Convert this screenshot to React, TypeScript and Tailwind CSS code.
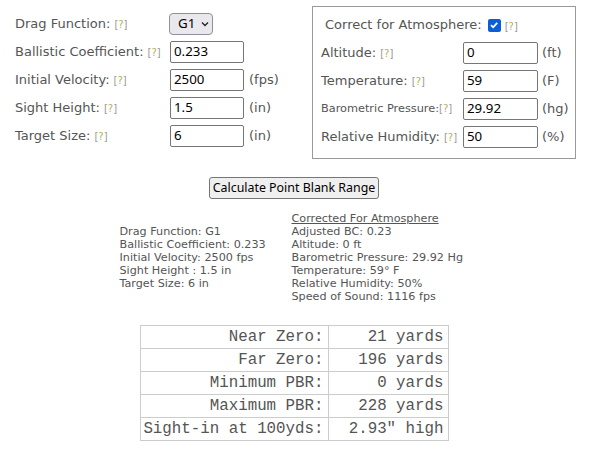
import React from "react";

const Help = () => (
  <span className="text-[10px] text-[#999] ml-[4px]">
    [<span className="text-[#b2b25a]">?</span>]
  </span>
);

const leftRows = [
  { label: "Ballistic Coefficient:", value: "0.233", unit: "" },
  { label: "Initial Velocity:", value: "2500", unit: "(fps)" },
  { label: "Sight Height:", value: "1.5", unit: "(in)" },
  { label: "Target Size:", value: "6", unit: "(in)" },
];

const atmoRows = [
  { label: "Altitude:", value: "0", unit: "(ft)", small: false },
  { label: "Temperature:", value: "59", unit: "(F)", small: false },
  { label: "Barometric Pressure:", value: "29.92", unit: "(hg)", small: true },
  { label: "Relative Humidity:", value: "50", unit: "(%)", small: false },
];

const results = [
  ["Near Zero:", "21 yards"],
  ["Far Zero:", "196 yards"],
  ["Minimum PBR:", "0 yards"],
  ["Maximum PBR:", "228 yards"],
  ["Sight-in at 100yds:", '2.93" high'],
];

function TextBox({ value, width }: { value: string; width: string }) {
  return (
    <div
      className={`${width} h-[22px] border border-[#767676] rounded-[2px] bg-white px-[3px] flex items-center text-[13.3px] text-black font-['Noto_Sans',sans-serif]`}
    >
      {value}
    </div>
  );
}

export default function App() {
  return (
    <div className="w-[588px] bg-white font-['DejaVu_Sans',sans-serif] text-[#555]">
      {/* Inputs */}
      <div className="flex">
        <div className="w-[312px] pl-[15px] pt-[13px] flex flex-col gap-[6px]">
          <div className="flex items-center h-[22px]">
            <div className="w-[154px] text-[13px] whitespace-nowrap">
              Drag Function:<Help />
            </div>
            <div className="w-[44px] h-[22px] rounded-[4px] border border-[#8f8f9d] bg-[#e9e9ed] flex items-center pl-[8px] gap-[6px] text-[13.3px] text-black font-['Noto_Sans',sans-serif]">
              G1
              <svg width="8" height="6" viewBox="0 0 8 6">
                <path d="M1 1.5 L4 4.5 L7 1.5" fill="none" stroke="#222" strokeWidth="1.3" />
              </svg>
            </div>
          </div>
          {leftRows.map((r) => (
            <div key={r.label} className="flex items-center h-[22px]">
              <div className="w-[155px] text-[13px] whitespace-nowrap">
                {r.label}
                <Help />
              </div>
              <TextBox value={r.value} width="w-[74px]" />
              <span className="ml-[5px] text-[13px]">{r.unit}</span>
            </div>
          ))}
        </div>

        <div className="w-[264px] mt-[6px] border border-[#999] pt-[7px] pb-[10px] pl-[8px]">
          <div className="h-[22px] flex items-center pl-[4px] text-[13px]">
            Correct for Atmosphere:
            <span className="ml-[6px] w-[13px] h-[13px] rounded-[2px] bg-[#0b5ed7] flex items-center justify-center">
              <svg width="10" height="10" viewBox="0 0 10 10">
                <path d="M2 5.2 L4.2 7.3 L8.2 2.8" fill="none" stroke="white" strokeWidth="1.8" />
              </svg>
            </span>
            <span className="self-start mt-[2px]">
              <Help />
            </span>
          </div>
          <div className="flex flex-col gap-[6px] mt-[6px]">
            {atmoRows.map((r) => (
              <div key={r.label} className="flex items-center h-[22px]">
                <div className={`w-[142px] whitespace-nowrap ${r.small ? "text-[11.3px]" : "text-[13px]"}`}>
                  {r.label}
                  {r.small ? (
                    <span className="text-[10px] text-[#999]">
                      [<span className="text-[#b2b25a]">?</span>]
                    </span>
                  ) : (
                    <Help />
                  )}
                </div>
                <TextBox value={r.value} width="w-[75px]" />
                <span className="ml-[4px] text-[13px]">{r.unit}</span>
              </div>
            ))}
          </div>
        </div>
      </div>

      {/* Button */}
      <div className="flex justify-center mt-[18px]">
        <button className="w-[170px] h-[22px] px-0 whitespace-nowrap rounded-[3px] border border-[#767676] bg-[#efefef] text-[12.4px] text-black font-['Noto_Sans',sans-serif]">
          Calculate Point Blank Range
        </button>
      </div>

      {/* Summary */}
      <div className="flex justify-center items-center gap-[24px] mt-[13px] text-[11.2px] leading-[13px]">
        <div className="w-[148px] whitespace-nowrap">
          <div>Drag Function: G1</div>
          <div>Ballistic Coefficient: 0.233</div>
          <div>Initial Velocity: 2500 fps</div>
          <div>Sight Height : 1.5 in</div>
          <div>Target Size: 6 in</div>
        </div>
        <div className="w-[177px] whitespace-nowrap">
          <div className="underline">Corrected For Atmosphere</div>
          <div>Adjusted BC: 0.23</div>
          <div>Altitude: 0 ft</div>
          <div>Barometric Pressure: 29.92 Hg</div>
          <div>Temperature: 59° F</div>
          <div>Relative Humidity: 50%</div>
          <div>Speed of Sound: 1116 fps</div>
        </div>
      </div>

      {/* Results table */}
      <div className="flex justify-center mt-[22px] pb-[8px]">
        <table className="border-collapse font-['Liberation_Mono',monospace] text-[15.8px] text-[#555]">
          <tbody>
            {results.map(([k, v]) => (
              <tr key={k} className="h-[23px]">
                <td className="w-[188px] border border-[#ccc] text-right pr-[4px] py-0 leading-[18px]">{k}</td>
                <td className="w-[120px] border border-[#ccc] text-right pr-[4px] py-0 leading-[18px]">{v}</td>
              </tr>
            ))}
          </tbody>
        </table>
      </div>
    </div>
  );
}
